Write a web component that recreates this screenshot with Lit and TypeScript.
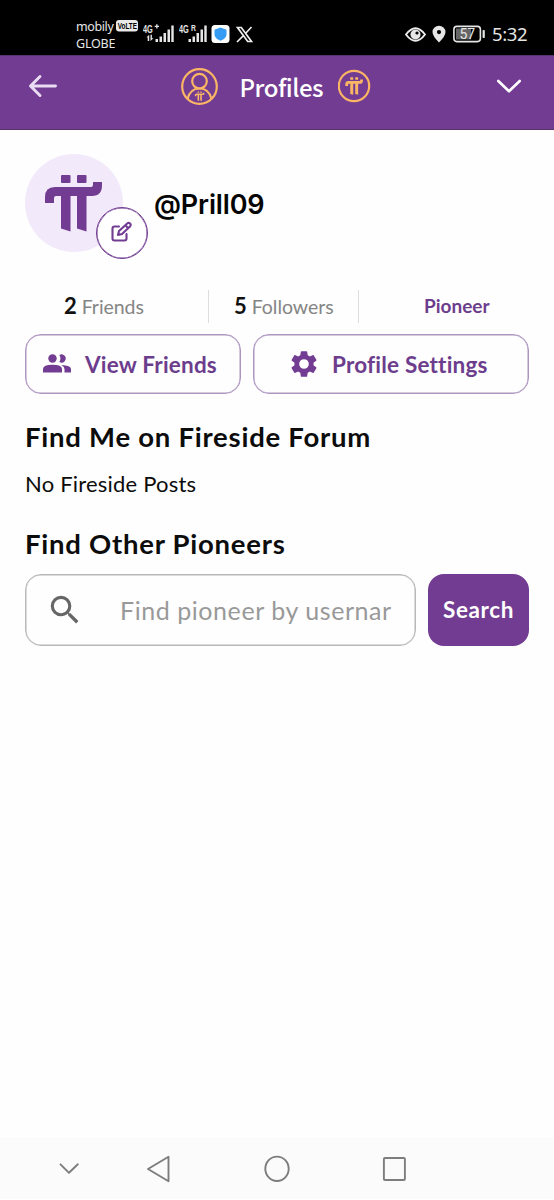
import { LitElement, html, css, svg } from "lit";
import { customElement } from "lit/decorators.js";

const piMark = svg`
  <rect x="16" y="0" width="9.5" height="8" rx="1"/>
  <rect x="32" y="0" width="9.5" height="8" rx="1"/>
  <path d="M0 28V22Q0 12 10 12H46Q48 12 48 10V7H57V10Q57 21 47 21H41.500V56.500L32 53.500V21H25.500V56.500L16 53.500V21H11Q9 21 9 23V28Z"/>`;

@customElement("status-bar")
class StatusBar extends LitElement {
  static styles = css`
    :host { display: flex; height: 55px; background: #000; color: #e6e6e6; box-sizing: border-box; padding-left: 76px; align-items: flex-start; font-family: "Noto Sans", sans-serif; }
    svg { display: block; flex: none; fill: currentColor; }
    .carrier { width: 67px; padding-top: 18px; font-size: 12.5px; line-height: 17px; flex: none; }
    .line { display: flex; align-items: center; height: 17px; letter-spacing: -0.2px; }
    .name { width: 40px; letter-spacing: -0.4px; }
    .volte { margin-top: -2px; }
    .label { font: 700 9.5px "Liberation Sans", sans-serif; fill: #000; letter-spacing: 0; }
    .signal { margin-top: 22px; }
    .second { margin-left: 5px; }
    .shield { margin: 25px 0 0 4px; }
    .x { margin: 26px 0 0 6px; }
    .eye { margin: 26px 0 0 152px; }
    .pin { margin: 25px 0 0 6px; }
    .battery { margin: 25px 0 0 7px; }
    .time { margin: 21px 0 0 6px; font-size: 18.500px; line-height: 25px; letter-spacing: -0.35px; }
    .cell { font: 700 11.5px "Liberation Sans", sans-serif; }
    .roam { font: 700 8.5px "Liberation Sans", sans-serif; }
    .charge { font: 14px Roboto, sans-serif; }
  `;
  signal(second: boolean) {
    return html`<svg class="signal ${second ? "second" : ""}" width=${second ? 28 : 31} height="21" viewBox="0 0 ${second ? 28 : 31} 21">
      <text class="cell" transform="translate(0 11) scale(.64 1)">4G</text>
      ${second
        ? svg`<text class="roam" transform="translate(12 9) scale(.8 1)">R</text>`
        : svg`<path d="M11.700 3.700h1.500V2.200h1.300v1.500H16V5h-1.500v1.500h-1.300V5h-1.500zM3.500 15.500l2.700-2.700V19H4.700v-3.500zM7.500 12.800V19l3-2.800H8.900v-3.400z"/>`}
      <g transform="translate(${second ? 9 : 12} 0)">
        <rect x=".5" y="17" width="2.500" height="3"/><rect x="4.500" y="14.500" width="2.500" height="5.500"/><rect x="8.500" y="11" width="2.500" height="9"/><rect x="12.500" y="7.500" width="2.500" height="12.500"/><rect x="16.300" y="3.500" width="2.400" height="16.500"/>
      </g></svg>`;
  }
  render() {
    return html`
      <div class="carrier">
        <div class="line"><span class="name">mobily</span><svg class="volte" width="22" height="12" viewBox="0 0 22 12"><rect width="22" height="11.500" rx="3" fill="#e9e9e9"/><text class="label" transform="translate(1.800 9.200) scale(.67 1)">VoLTE</text></svg></div>
        <div class="line">GLOBE</div>
      </div>
      ${this.signal(false)}${this.signal(true)}
      <svg class="shield" width="19" height="18" viewBox="0 0 19 18"><rect x=".5" width="18" height="18" rx="3.500" fill="#fff"/><path d="M9.500 2.500l6 2.200v4.500q0 4-6 6.500-6-2.500-6-6.500V4.700z" fill="#349cf2"/></svg>
      <svg class="x" width="17" height="17" viewBox="0 0 17 17" fill="none"><path d="M1.500 1.500h3.800l10.200 14h-3.800zM15.500 1L9.500 7.500M7 10l-6 6" fill="none" stroke="#eee" stroke-width="1.700"/></svg>
      <svg class="eye" width="21" height="17" viewBox="0 0 21 17"><path d="M1 8.500Q10.500-4 20 8.500 10.500 21 1 8.500Z" fill="none" stroke="#eee" stroke-width="1.900"/><circle cx="10.500" cy="8.500" r="5"/><circle cx="12" cy="7" r="1.600" fill="#000"/></svg>
      <svg class="pin" width="14" height="18" viewBox="0 0 14 18"><path fill-rule="evenodd" d="M7 .7A6.500 6.500 0 0 1 13.500 7q0 4-6.500 10.500Q.5 11 .5 7A6.500 6.500 0 0 1 7 .7zM7 5a2.100 2.100 0 1 0 0 4.200A2.100 2.100 0 0 0 7 5z"/></svg>
      <svg class="battery" width="33" height="18" viewBox="0 0 33 18"><rect x="3" y="3.500" width="15" height="11" fill="#666"/><rect x=".9" y="1.400" width="26.500" height="15.200" rx="3" fill="none" stroke="#e6e6e6" stroke-width="1.600"/><rect x="29.600" y="5" width="2.200" height="8" rx=".7"/><text class="charge" x="6.500" y="14">57</text></svg>
      <span class="time">5:32</span>`;
  }
}

@customElement("app-header")
class AppHeader extends LitElement {
  static styles = css`
    :host { display: flex; align-items: flex-start; height: 75px; box-sizing: border-box; background: #723c92; border-bottom: 1px solid #56346b; border-top: 1px solid #56346b; color: #fff; }
    svg { display: block; flex: none; fill: none; stroke: #fff; }
    .back { margin: 18px 0 0 28px; }
    .person { margin: 12px 0 0 123px; stroke: #fab565; }
    .title { padding: 12px 0 0 20.5px; font: 500 24px/38px "Noto Sans CJK SC", "Noto Sans", sans-serif; letter-spacing: -0.45px; width: 98.5px; }
    .coin { margin-top: 13px; stroke: #fab565; }
    .down { margin: 22px 0 0 125px; }
    .gold { fill: #fab565; stroke: none; }
  `;
  render() {
    return html`
      <svg class="back" width="30" height="24" viewBox="0 0 30 24" stroke-width="2.900" stroke-linecap="round" stroke-linejoin="round"><path d="M27.500 12H3M12 2.500L2.500 12l9.500 9.500" stroke="#eadcf2"/></svg>
      <svg class="person" width="38" height="38" viewBox="0 0 38 38" stroke-width="2.200"><circle cx="18.500" cy="18.500" r="17.300"/><circle cx="18.500" cy="13.200" r="7.300"/><path d="M6.500 31Q9 20.500 18.500 20.500T30.500 31"/><g class="gold" transform="translate(13.800 23.500) scale(.17)">${piMark}</g></svg>
      <span class="title">Profiles</span>
      <svg class="coin" width="34" height="34" viewBox="0 0 34 34" stroke-width="2.200"><circle cx="16" cy="17" r="15.200"/><g class="gold" transform="translate(7.300 8.300) scale(.31)">${piMark}</g></svg>
      <svg class="down" width="26" height="18" viewBox="0 0 26 18" stroke-width="2.600" stroke-linecap="round" stroke-linejoin="round"><path d="M1.300 3L12 13.300 22.700 3"/></svg>`;
  }
}

@customElement("system-nav")
class SystemNav extends LitElement {
  static styles = css`
    :host { display: flex; height: 62px; background: #fbfbfb; padding: 16px 0 0 56px; box-sizing: border-box; border-bottom: 1px solid #fff; }
    svg { display: block; flex: none; fill: none; stroke: #7d7d7d; stroke-width: 1.900px; stroke-linejoin: round; stroke-linecap: round; }
    .back { margin-left: 62px; }
    .home { margin-left: 91px; }
    .recent { margin-left: 89px; }
  `;
  render() {
    return html`
      <svg width="27" height="30" viewBox="0 0 27 30"><path d="M4.500 10.300L13 18.800l8.800-8.500"/></svg>
      <svg class="back" width="28" height="30" viewBox="0 0 28 30"><path d="M23.500 2.700v24.500L3 15z"/></svg>
      <svg class="home" width="28" height="30" viewBox="0 0 28 30"><ellipse cx="13" cy="14.800" rx="11.700" ry="12.200"/></svg>
      <svg class="recent" width="28" height="30" viewBox="0 0 28 30"><rect x="2.900" y="4" width="21" height="22" rx="1"/></svg>`;
  }
}

@customElement("app-root")
class AppRoot extends LitElement {
  static styles = css`
    :host { display: flex; flex-direction: column; height: 1200px; background: #fefefe; color: #0c0c0c; font-family: Lato, sans-serif; }
    main { flex: 1; padding: 24px 25px 0; }
    svg { display: block; flex: none; }
    .profile { display: flex; height: 136px; }
    .avatar { position: relative; width: 98px; height: 98px; border-radius: 50%; background: #f2e9fa; flex: none; }
    .mark { padding: 21px 0 0 20px; fill: #723c92; }
    .edit { position: absolute; left: 71px; top: 53px; width: 52px; height: 52px; box-sizing: border-box; border: 1px solid #723c92; box-shadow: inset 0 0 0 0.5px #723c92; border-radius: 50%; background: #fff; padding: 13px; }
    .user { margin: 33px 0 0 31px; font: 600 27px/36px Inter, Lato, sans-serif; letter-spacing: -0.15px; color: #050505; }
    .stats { display: grid; grid-template-columns: 184px 150px 1fr; height: 32px; margin-bottom: 12px; line-height: 32px; font-size: 19.500px; color: #858585; }
    .stat { border-right: 1px solid #ddd; white-space: nowrap; letter-spacing: -0.05px; }
    .friends { padding-left: 39px; }
    .followers { padding-left: 25px; }
    .count { font-size: 22px; font-weight: 700; color: #111; margin-right: 5px; }
    .rank { padding-left: 65px; color: #6d3d8d; font-weight: 700; font-size: 19px; letter-spacing: 0; }
    .actions { display: grid; grid-template-columns: 216px 276px; gap: 12px; height: 60px; }
    .action { display: flex; align-items: center; border: 1px solid #ae96c0; box-shadow: inset 0 0 0 0.5px #ae96c0; border-radius: 16px; box-sizing: border-box; color: #6d3d8d; font-weight: 700; font-size: 22.500px; white-space: nowrap; letter-spacing: .2px; }
    .view { padding-left: 16px; gap: 13px; }
    .settings { padding-left: 34px; gap: 12px; }
    h2 { font-weight: 700; font-size: 27.500px; line-height: 36px; margin: 0; letter-spacing: .75px; }
    .forum { margin-top: 25px; }
    .empty { margin: 15px 0 28px; line-height: 28px; font-size: 22px; letter-spacing: .2px; }
    .search { display: flex; gap: 12px; height: 72px; margin-top: 12px; }
    .field { display: flex; align-items: center; width: 391px; box-sizing: border-box; border: 1px solid #b8b8b8; box-shadow: inset 0 0 0 0.5px #b8b8b8; border-radius: 16px; padding-left: 20px; }
    .hint { margin-left: 36px; color: #999; font-size: 25px; width: 273px; overflow: hidden; white-space: nowrap; letter-spacing: .56px; }
    .go { width: 101px; border-radius: 16px; background: #723c92; color: #fff; font-weight: 700; font-size: 22.500px; letter-spacing: .6px; line-height: 72px; text-align: center; }
  `;
  render() {
    return html`
      <status-bar></status-bar>
      <app-header></app-header>
      <main>
        <div class="profile">
          <div class="avatar">
            <svg class="mark" width="57" height="57" viewBox="0 0 57 57">${piMark}</svg>
            <div class="edit"><svg width="24" height="24" viewBox="0 0 24 24" fill="none" stroke="#723c92" stroke-width="2.100" stroke-linecap="round" stroke-linejoin="round"><path d="M9 5.500H4.500Q2.500 5.500 2.500 7.500v10q0 2 2 2H14.500q2 0 2-2V13"/><path d="M8 14l1-4L17.500 2.300q1.200-1 2.500.2t.2 2.700L12 13zM15.500 4.500l2.600 2.600"/></svg></div>
          </div>
          <div class="user">@Prill09</div>
        </div>
        <div class="stats">
          <div class="stat friends"><span class="count">2</span>Friends</div>
          <div class="stat followers"><span class="count">5</span>Followers</div>
          <div class="rank">Pioneer</div>
        </div>
        <div class="actions">
          <div class="action view">
            <svg width="30" height="30" viewBox="0 0 30 30" fill="#723c92"><circle cx="10.500" cy="9.500" r="4.200"/><path d="M17.300 5.900a4.200 4.200 0 1 1 0 7.200q2.300-3.600 0-7.200zM1 23.500V20q0-4.300 9.500-4.300T20 20v3.500zM19.500 15.900q9.500.4 9.500 4.100v3.500h-6.500V20q0-2.400-3-4.100z"/></svg>
            <span>View Friends</span>
          </div>
          <div class="action settings">
            <svg width="32" height="32" viewBox="0 0 24 24" fill="#723c92"><path d="M19.140 12.940c.04-.3.060-.610.060-.940s-.020-.640-.070-.940l2.030-1.580a.49.49 0 0 0 .12-.61l-1.920-3.320a.488.488 0 0 0-.590-.220l-2.390.960c-.5-.380-1.030-.7-1.620-.940L14.400 2.810a.484.484 0 0 0-.480-.410h-3.840c-.24 0-.430.170-.470.410L9.250 5.350c-.590.240-1.130.57-1.620.940l-2.390-.960c-.22-.080-.47 0-.590.220L2.740 8.870c-.12.210-.080.470.120.610l2.030 1.580c-.05.3-.090.630-.090.940s.020.640.070.940l-2.030 1.580a.49.49 0 0 0-.12.610l1.920 3.320c.12.220.37.290.590.220l2.390-.960c.5.380 1.030.7 1.620.940l.36 2.540c.05.240.24.410.48.410h3.840c.24 0 .440-.170.470-.410l.36-2.540c.590-.240 1.130-.560 1.620-.940l2.390.960c.22.080.47 0 .590-.220l1.920-3.320c.12-.220.070-.47-.12-.61zM12 15.600A3.600 3.600 0 1 1 12 8.400a3.600 3.600 0 0 1 0 7.200z"/></svg>
            <span>Profile Settings</span>
          </div>
        </div>
        <h2 class="forum">Find Me on Fireside Forum</h2>
        <div class="empty">No Fireside Posts</div>
        <h2>Find Other Pioneers</h2>
        <div class="search">
          <div class="field">
            <svg width="38" height="38" viewBox="0 0 24 24" fill="#666"><path d="M15.500 14h-.790l-.280-.270A6.471 6.471 0 0 0 16 9.500 6.500 6.500 0 1 0 9.500 16c1.610 0 3.090-.590 4.230-1.570l.27.280v.790l5 4.990L20.490 19zm-6 0C7.010 14 5 11.990 5 9.500S7.010 5 9.500 5 14 7.010 14 9.500 11.990 14 9.500 14z"/></svg>
            <span class="hint">Find pioneer by usernar</span>
          </div>
          <div class="go">Search</div>
        </div>
      </main>
      <system-nav></system-nav>`;
  }
}
